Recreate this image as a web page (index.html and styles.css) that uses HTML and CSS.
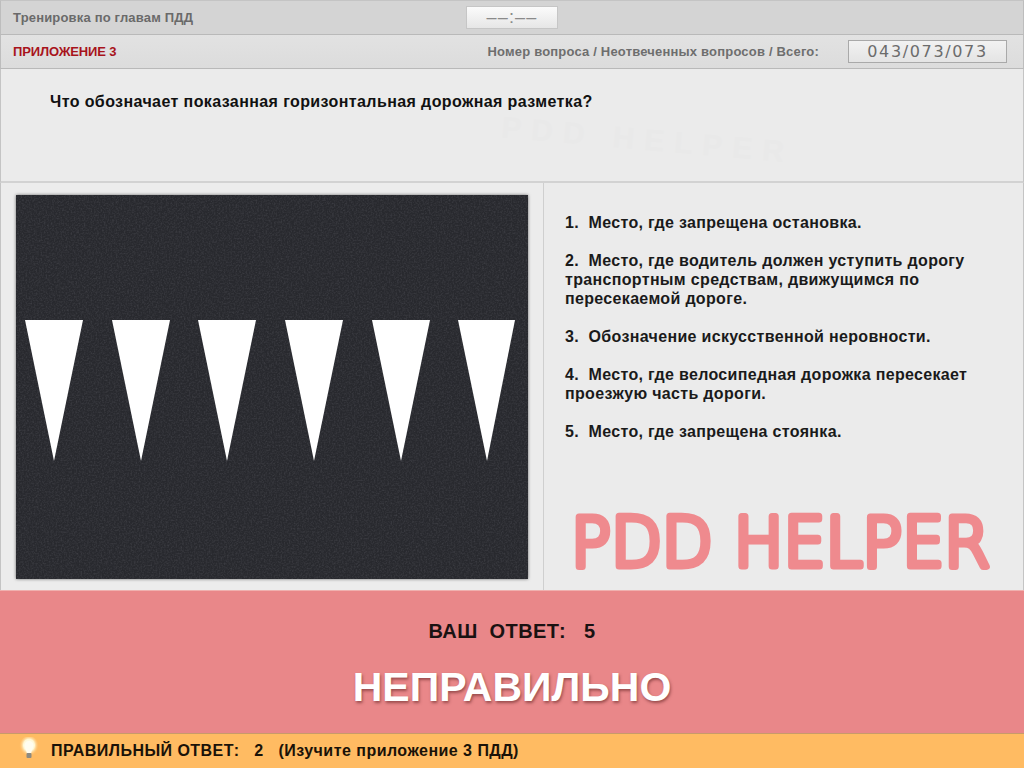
FILE: index.html
```html
<!DOCTYPE html>
<html lang="ru">
<head>
<meta charset="utf-8">
<title>Тренировка по главам ПДД</title>
<link rel="stylesheet" href="styles.css">
</head>
<body>
<div class="page">
  <header class="bar bar-top">
    <div class="bar-title">Тренировка по главам ПДД</div>
    <div class="timer">––:––</div>
  </header>
  <div class="bar bar-info">
    <div class="appendix">ПРИЛОЖЕНИЕ 3</div>
    <div class="counter-wrap">
      <span class="counter-label">Номер вопроса / Неотвеченных вопросов / Всего:</span>
      <span class="counter">043/073/073</span>
    </div>
  </div>
  <section class="question">
    <span class="watermark" aria-hidden="true">PDD HELPER</span>
    <span class="question-text">Что обозначает показанная горизонтальная дорожная разметка?</span>
  </section>
  <main class="content">
    <div class="picture-col">
      <svg class="road" viewBox="0 0 512 384" width="512" height="384" xmlns="http://www.w3.org/2000/svg">
        <defs>
          <filter id="asphalt" x="0" y="0" width="100%" height="100%">
            <feTurbulence type="fractalNoise" baseFrequency="0.6" numOctaves="2" seed="4"/>
            <feColorMatrix type="matrix" values="0 0 0 0 0.19  0 0 0 0 0.19  0 0 0 0 0.22  0.5 0 0 0 -0.2"/>
          </filter>
        </defs>
        <rect width="512" height="384" fill="#28292e"/>
        <rect width="512" height="384" filter="url(#asphalt)"/>
        <g fill="#fff">
          <polygon points="9,125 67,125 38,266"/>
          <polygon points="96,125 154,125 125,266"/>
          <polygon points="182,125 240,125 211,266"/>
          <polygon points="269,125 327,125 298,266"/>
          <polygon points="356,125 414,125 385,266"/>
          <polygon points="442,125 499,125 471,266"/>
        </g>
      </svg>
    </div>
    <div class="answers-col">
      <ol class="answers">
        <li>1.&nbsp; Место, где запрещена остановка.</li>
        <li>2.&nbsp; Место, где водитель должен уступить дорогу транспортным средствам, движущимся по пересекаемой дороге.</li>
        <li>3.&nbsp; Обозначение искусственной неровности.</li>
        <li>4.&nbsp; Место, где велосипедная дорожка пересекает проезжую часть дороги.</li>
        <li>5.&nbsp; Место, где запрещена стоянка.</li>
      </ol>
      <svg class="logo" viewBox="0 0 430 70" width="430" height="70" xmlns="http://www.w3.org/2000/svg">
        <text class="logo-text" x="0" y="59" textLength="419" lengthAdjust="spacingAndGlyphs">PDD HELPER</text>
      </svg>
    </div>
  </main>
  <section class="result">
    <div class="your-answer">ВАШ&nbsp; ОТВЕТ:&nbsp;&nbsp; 5</div>
    <div class="verdict">НЕПРАВИЛЬНО</div>
  </section>
  <footer class="hint">
    <svg class="bulb" viewBox="0 0 20 26" width="20" height="26" xmlns="http://www.w3.org/2000/svg">
      <defs>
        <radialGradient id="glow" cx="50%" cy="42%" r="50%">
          <stop offset="0" stop-color="#fffef6"/>
          <stop offset="0.55" stop-color="#fff8d6"/>
          <stop offset="1" stop-color="#ffbc62" stop-opacity="0"/>
        </radialGradient>
      </defs>
      <ellipse cx="10" cy="10" rx="10" ry="11" fill="url(#glow)"/>
      <path d="M5.5 8.5a4.5 4.5 0 0 1 9 0c0 3-2 4.500-2.300 7.500h-4.400c-.3-3-2.300-4.500-2.300-7.500z" fill="#fffdf0"/>
      <rect x="7.500" y="16" width="5" height="5" rx="1" fill="#8d8a80"/>
    </svg>
    <span class="hint-text">ПРАВИЛЬНЫЙ ОТВЕТ:&nbsp;&nbsp; 2&nbsp;&nbsp; (Изучите приложение 3 ПДД)</span>
  </footer>
</div>
</body>
</html>
```
FILE: styles.css
```css
* { box-sizing: border-box; }
html, body { margin: 0; padding: 0; }
body {
  width: 1024px;
  height: 768px;
  overflow: hidden;
  font-family: "Liberation Sans", Arial, sans-serif;
  background: #ebebeb;
}
.page {
  width: 1024px;
  height: 768px;
  display: flex;
  flex-direction: column;
}
.bar {
  display: flex;
  align-items: center;
  border-left: 1px solid #bdbdbd;
  border-right: 1px solid #bdbdbd;
  border-bottom: 1px solid #b9b9b9;
}
.bar-top {
  height: 35px;
  border-top: 1px solid #c4c4c4;
  background: #d4d4d4;
  padding-left: 12px;
}
.bar-title {
  font-size: 13px;
  letter-spacing: 0.18px;
  font-weight: bold;
  color: #6a6a6a;
  width: 453px;
}
.timer {
  width: 92px;
  height: 23px;
  margin-top: -1px;
  background: linear-gradient(#fbfbfb, #e6e6e6);
  border: 1px solid #c6c6c6;
  color: #8a8a8a;
  font-size: 18px;
  line-height: 20px;
  letter-spacing: 1.2px;
  display: flex;
  align-items: center;
  justify-content: center;
}
.bar-info {
  height: 34px;
  background: linear-gradient(#e2e2e2, #dcdcdc);
  padding-left: 12px;
  justify-content: space-between;
  padding-right: 16px;
}
.appendix {
  font-size: 13px;
  letter-spacing: -0.15px;
  font-weight: bold;
  color: #a8141c;
}
.counter-wrap {
  display: flex;
  align-items: center;
}
.counter-label {
  font-size: 13px;
  letter-spacing: 0.19px;
  font-weight: bold;
  color: #6e6e6e;
  margin-right: 29px;
}
.counter {
  width: 159px;
  height: 23px;
  background: linear-gradient(#f2f2f2, #e4e4e4);
  border: 1px solid #a9a9a9;
  color: #6c6c6c;
  font-family: "DejaVu Sans", sans-serif;
  font-size: 16px;
  letter-spacing: 1.65px;
  display: flex;
  align-items: center;
  justify-content: center;
}
.question {
  position: relative;
  overflow: hidden;
  height: 114px;
  padding: 24px 0 0 49px;
  font-size: 16px;
  letter-spacing: 0.4px;
  line-height: 18px;
  font-weight: bold;
  color: #111;
  background: #ebebeb;
  border-left: 1px solid #c4c4c4;
  border-right: 1px solid #c4c4c4;
  border-bottom: 2px solid #d2d2d2;
}
.question-text {
  position: relative;
}
.watermark {
  position: absolute;
  left: 500px;
  top: 54px;
  font-size: 30px;
  letter-spacing: 10px;
  line-height: 34px;
  color: #e9e9e9;
  transform: rotate(5deg);
  white-space: nowrap;
}
.content {
  flex: 1;
  min-height: 0;
  display: flex;
  border-left: 1px solid #c4c4c4;
  border-right: 1px solid #c4c4c4;
  background: #ebebeb;
}
.picture-col {
  width: 543px;
  padding: 12px 0 0 15px;
  border-right: 1px solid #cfcfcf;
  background: #ececec;
}
.road {
  display: block;
  box-shadow: 0 0 3px rgba(0, 0, 0, 0.55);
}
.answers-col {
  flex: 1;
  min-width: 0;
  display: flex;
  flex-direction: column;
  padding: 30px 0 0 21px;
}
.answers {
  list-style: none;
  margin: 0;
  padding: 0 30px 0 0;
  font-size: 16px;
  letter-spacing: 0.33px;
  line-height: 19px;
  font-weight: bold;
  color: #1a1a1a;
  display: flex;
  flex-direction: column;
  gap: 19px;
  flex: 1;
}
.logo {
  display: block;
  margin: 0 0 13px 6px;
  overflow: visible;
}
.logo-text {
  font-family: "DejaVu Sans", sans-serif;
  font-size: 68px;
  font-weight: 200;
  fill: #ef8a8e;
  stroke: #ef8a8e;
  stroke-width: 7px;
  stroke-linejoin: round;
  stroke-linecap: round;
}
.result {
  height: 143px;
  background: #e98789;
  border-top: 1px solid #f0b0ae;
  display: flex;
  flex-direction: column;
  align-items: center;
}
.your-answer {
  margin-top: 29px;
  font-size: 20px;
  letter-spacing: 0.4px;
  line-height: 22px;
  font-weight: bold;
  color: #1a1212;
}
.verdict {
  margin-top: 22px;
  font-size: 41px;
  line-height: 46px;
  font-weight: bold;
  color: #fff;
  text-shadow: 1px 2px 3px rgba(90, 30, 30, 0.55);
}
.hint {
  height: 35px;
  background: #ffbb62;
  border-top: 1px solid #c89a6a;
  display: flex;
  align-items: center;
  padding-left: 19px;
}
.bulb {
  display: block;
  margin-top: -3px;
}
.hint-text {
  margin-left: 12px;
  font-size: 16px;
  letter-spacing: 0.47px;
  font-weight: bold;
  color: #1a1208;
}
```
